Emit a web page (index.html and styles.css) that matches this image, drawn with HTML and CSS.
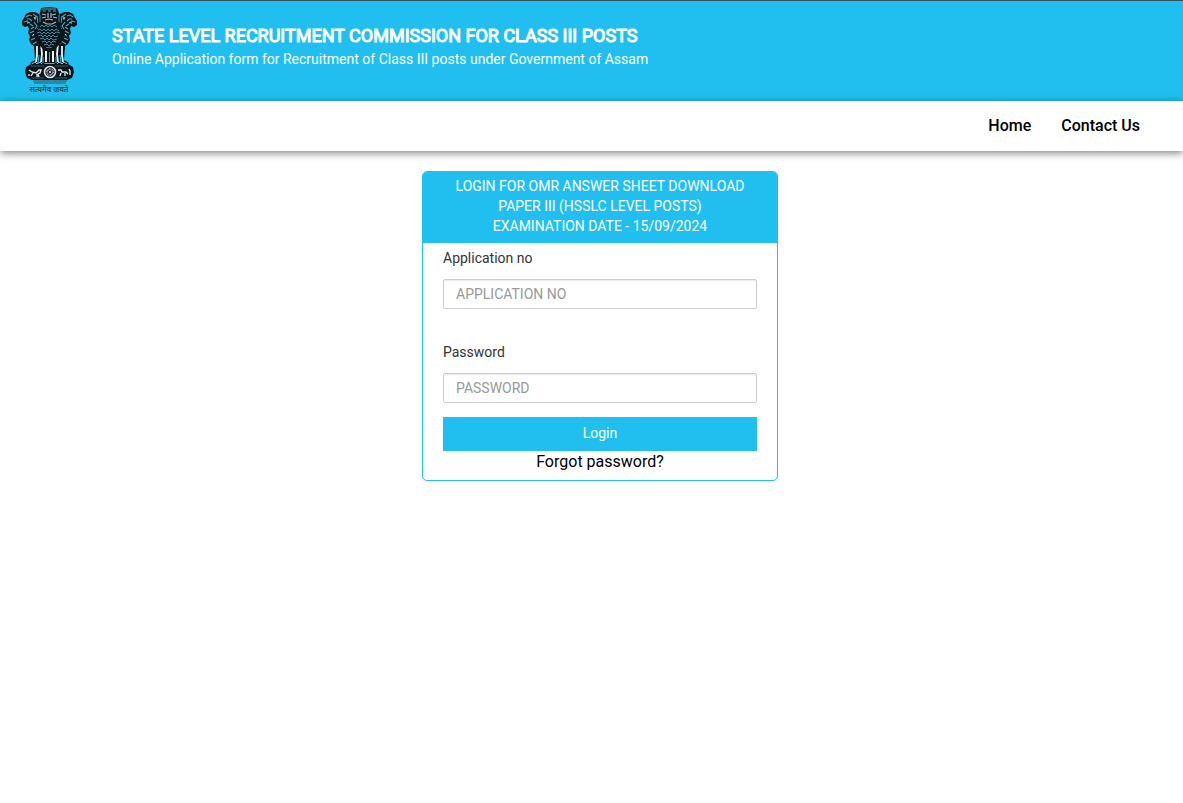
FILE: index.html
```html
<!DOCTYPE html>
<html lang="en">
<head>
<meta charset="utf-8">
<meta name="viewport" content="width=device-width, initial-scale=1">
<title>State Level Recruitment Commission</title>
<link rel="stylesheet" href="styles.css">
</head>
<body>
<header class="banner">
  <svg class="emblem" viewBox="20 5 58 90" role="img" aria-label="State emblem of India">
    <defs>
      <g id="side-lion">
        <path d="M39 14 35 12 30 12 26 14 24 18 22 21 22 25 25 27 28 26 29 29 28 33 30 36 29 40 31 44 34 46 34 50 40 50 47 39 42 24Z" fill="#0d161b"/>
        <path d="M26 17l3-2 3 1M24 22l3-1 1 3M27 19l3 0 2 2M30 24l3 2M33 14l3 2-1 4M37 16l1 7M31 29l3-2M30 33l4-2M32 36l4-3M31 40l4-2M34 22l3 4-2 3M39 26l1 4M35 36l3 2M41 34l-2 5M33 44l5-3M42 31l2 4M37 31l2 2M38 44l3-3" fill="none" stroke="#48a9c8" stroke-width="1.1"/>
        <path d="M34 17l1 2M28 22l2 1M37 28l1 1M33 34l1 1M38 40l1-1" stroke="#d3e5eb" stroke-width=".9"/>
        <path d="M34 45 48 43 46 58 44 65 33 66 30 63 35 60Z" fill="#0d161b"/>
        <path d="M37 46v9l-1 7M41 44l1 10-1 8M45 45v11" fill="none" stroke="#eef6f8" stroke-width="1.8"/>
        <path d="M39 55l-1 8M43 57v6" stroke="#21bfef" stroke-width="1"/>
        <path d="M32 64l3-2 2 2 3-2 2 2" fill="none" stroke="#a8d6e4" stroke-width=".9"/>
      </g>
    </defs>
    <use href="#side-lion"/>
    <use href="#side-lion" transform="matrix(-1 0 0 1 99 0)"/>
    <path d="M41 8 49 7 57 8 59 13 61 19 60 26 65 34 61 43 54 50 49 53 44 50 37 43 34 34 39 26 38 19 40 13Z" fill="#0d161b"/>
    <path d="M42 9h14M43 11h3m2 0h3m2 0h3" stroke="#58a9c2" stroke-width="1"/>
    <path d="M42 14l4 1M52 15l4-1M42 18l4-1M53 17l4 1M48 13v5M51 13v5M45 20l4-1 4 1M43 22l4 2h5l4-2" fill="none" stroke="#9dbecb" stroke-width="1.2"/>
    <path d="M40 15v7M59 15v7" stroke="#279cc0" stroke-width="1"/>
    <path d="M40 27l2-2 2 2 2-2 2 2 2-2 2 2 2-2 3 2M38 30l2-1 2 2 2-2 2 2 2-2 2 2 2-2 2 2 2-2 3 2M37 33l3-1 2 2 2-2 2 2 2-2 2 2 2-2 2 2 2-2 4 1M38 36l3-1 2 2 2-2 2 2 2-2 2 2 2-2 2 2 3-1M40 39l3-1 2 2 2-2 2 2 2-2 2 2 4-1M42 42l3-1 2 2 2-2 2 2 2-2 3 1M44 45l3-1 2 2 2-2 3 1M46 48l3-1 3 1" fill="none" stroke="#438ba3" stroke-width="1"/>
    <path d="M44 48h11v15H44Z" fill="#0d161b"/>
    <path d="M46 51v11M53 51v11" stroke="#f0f7f9" stroke-width="2"/>
    <path d="M49 52h1v10h-1Z" fill="#21bfef"/>
    <path d="M31 64h37l5 3 1 5-2 6-5 2H32l-5-2-2-6 1-5Z" fill="#0d161b"/>
    <path d="M31 66h13M55 66h13M32 78h12M55 78h12" stroke="#456d7a" stroke-width=".8"/>
    <circle cx="50" cy="72" r="5.5" fill="#0d161b" stroke="#dbe6ea" stroke-width="1.6"/>
    <circle cx="50" cy="72" r="3" fill="none" stroke="#bdcbd0" stroke-width="2" stroke-dasharray=".7 .6"/>
    <circle cx="50" cy="72" r="1" fill="#fff"/>
    <path d="M29 70l3 2 4 1 3-3 2 0-1 3-2 1 1 3M33 73l-2 3M37 74v3M29 74v2M58 70l3 0 1 2h4l2 2M61 73l-1 3M65 73v3M69 69l1 2v4" fill="none" stroke="#e4eef1" stroke-width="1.3"/>
    <path d="M33 81h34M34 83h32" stroke="#31525e"/>
    <text class="motto" x="49" y="92" text-anchor="middle">सत्यमेव जयते</text>
  </svg>
  <div class="titles">
    <h1>STATE LEVEL RECRUITMENT COMMISSION FOR CLASS III POSTS</h1>
    <p>Online Application form for Recruitment of Class III posts under Government of Assam</p>
  </div>
</header>
<nav class="menu">
  <a href="#">Home</a>
  <a href="#">Contact Us</a>
</nav>
<main class="content">
  <form class="card">
    <h2 class="card-title">LOGIN FOR OMR ANSWER SHEET DOWNLOAD<br>PAPER III (HSSLC LEVEL POSTS)<br>EXAMINATION DATE - 15/09/2024</h2>
    <div class="card-body">
      <div class="field">
        <label for="application">Application no</label>
        <input id="application" type="text" placeholder="APPLICATION NO">
      </div>
      <div class="field">
        <label for="password">Password</label>
        <input id="password" type="password" placeholder="PASSWORD">
      </div>
      <button class="login" type="submit">Login</button>
      <a class="forgot" href="#">Forgot password?</a>
    </div>
  </form>
</main>
</body>
</html>
```
FILE: styles.css
```css
* { box-sizing: border-box; }
body {
  margin: 0;
  background: #fff;
  color: #333;
  font: 14px/20px Roboto, "Liberation Sans", sans-serif;
}
.banner {
  display: flex;
  align-items: flex-start;
  gap: 34px;
  padding: 4px 20px 6px;
  border-top: 1px solid #34515c;
  background: #21bfef;
  color: #fff;
}
.emblem { width: 58px; height: 90px; flex: none; }
.motto { font: 8px "Noto Sans Devanagari", "Lohit Devanagari", sans-serif; fill: #0b2833; }
.titles { padding-top: 20px; }
.titles h1 {
  margin: 0;
  font-size: 18px;
  line-height: 22px;
  font-weight: 400;
  -webkit-text-stroke: 1px currentColor;
}
.titles p { margin: 2px 0 0; }
.menu {
  display: flex;
  justify-content: flex-end;
  gap: 30px;
  padding: 15px 43px;
  background: #fff;
  box-shadow: 0 2px 8px rgba(0, 0, 0, .5);
}
.menu a { color: #000; font-size: 16px; font-weight: 500; text-decoration: none; }
.content { display: flex; justify-content: center; padding: 20px 15px 20px 32px; }
.card {
  width: 100%;
  max-width: 356px;
  overflow: hidden;
  border: 1px solid #21bfef;
  border-radius: 5px;
  background: #fff;
}
.card-title {
  margin: 0;
  padding: 4px 10px 7px;
  background: #21bfef;
  color: #fff;
  font-size: 14px;
  line-height: 20px;
  font-weight: 400;
  text-align: center;
}
.card-body { display: flex; flex-direction: column; padding: 5px 20px 8px; }
.field { display: flex; flex-direction: column; gap: 11px; }
.field + .field { margin-top: 33px; }
.field input {
  width: 100%;
  height: 30px;
  padding: 4px 12px;
  border: 1px solid #ccc;
  border-radius: 2px;
  background: #fff;
  box-shadow: inset 0 1px 1px rgba(0, 0, 0, .08);
  color: #555;
  font: inherit;
}
.field input::placeholder { color: #999; opacity: 1; }
.login {
  margin-top: 14px;
  padding: 6px 12px 8px;
  border: 0;
  background: #21bfef;
  color: #fff;
  font: inherit;
  cursor: pointer;
}
.forgot { align-self: center; padding-top: 1px; color: #000; font-size: 16px; text-decoration: none; }
```
